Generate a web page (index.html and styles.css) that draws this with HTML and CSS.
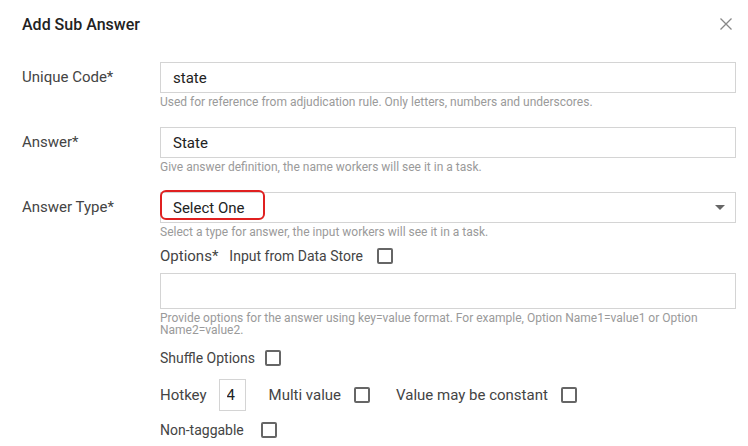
FILE: index.html
```html
<!DOCTYPE html>
<html>
<head>
    <title>Add Sub Answer</title>
    <link rel="stylesheet" href="styles.css">
</head>
<body>
    <div class="dialog">
        <div class="dialog-header">
            <h2 class="dialog-title">Add Sub Answer</h2>
            <button class="close-btn" aria-label="Close">
                <svg width="12" height="12" viewBox="0 0 12 12"><path d="M0.5 0.5 L11.5 11.5 M11.5 0.5 L0.5 11.5" stroke="#888" stroke-width="1.3" fill="none"/></svg>
            </button>
        </div>

        <div class="form-row">
            <label class="row-label" for="code">Unique Code*</label>
            <div class="row-field">
                <input class="text-input" type="text" id="code" value="state">
                <div class="hint">Used for reference from adjudication rule. Only letters, numbers and underscores.</div>
            </div>
        </div>

        <div class="form-row">
            <label class="row-label" for="answer">Answer*</label>
            <div class="row-field">
                <input class="text-input" type="text" id="answer" value="State">
                <div class="hint">Give answer definition, the name workers will see it in a task.</div>
            </div>
        </div>

        <div class="form-row">
            <label class="row-label" for="type">Answer Type*</label>
            <div class="row-field">
                <div class="select-box" id="type">
                    <span class="select-value">Select One</span>
                    <span class="select-arrow"></span>
                    <span class="highlight"></span>
                </div>
                <div class="hint">Select a type for answer, the input workers will see it in a task.</div>

                <div class="check-line options-line">
                    <span class="opt-label">Options*</span>
                    <span>Input from Data Store</span>
                    <span class="checkbox"></span>
                </div>
                <textarea class="text-area"></textarea>
                <div class="hint hint-wrap">Provide options for the answer using key=value format. For example, Option Name1=value1 or Option Name2=value2.</div>

                <div class="check-line shuffle-line">
                    <span>Shuffle Options</span>
                    <span class="checkbox"></span>
                </div>

                <div class="check-line hotkey-line">
                    <span>Hotkey</span>
                    <input class="hotkey-input" type="text" value="4">
                    <span class="multi-label">Multi value</span>
                    <span class="checkbox"></span>
                    <span class="const-label">Value may be constant</span>
                    <span class="checkbox"></span>
                </div>

                <div class="check-line tag-line">
                    <span>Non-taggable</span>
                    <span class="checkbox"></span>
                </div>
            </div>
        </div>
    </div>
</body>
</html>
```

FILE: styles.css
```css
body {
    margin: 0;
    background-color: #fff;
    font-family: Roboto, "Liberation Sans", Arial, sans-serif;
    color: #333;
}

.dialog {
    width: 748px;
    height: 446px;
    box-sizing: border-box;
    padding: 14px 12px 0 22px;
    overflow: hidden;
}

.dialog-header {
    display: flex;
    justify-content: space-between;
    align-items: center;
    height: 20px;
    margin-bottom: 28px;
}

.dialog-title {
    margin: 0;
    font-size: 16px;
    font-weight: 500;
    color: #222;
}

.close-btn {
    background: none;
    border: none;
    padding: 0;
    margin-right: 4px;
    display: flex;
    cursor: pointer;
}

.form-row {
    display: grid;
    grid-template-columns: 138px 1fr;
    margin-bottom: 18px;
}

.row-label {
    font-size: 15px;
    line-height: 31px;
    color: #444;
}

.text-input,
.select-box {
    display: block;
    width: 100%;
    height: 31px;
    box-sizing: border-box;
    border: 1px solid #d4d4d4;
    padding: 0 12px;
    font-family: inherit;
    font-size: 15px;
    color: #222;
    outline: none;
}

.select-box {
    position: relative;
    display: flex;
    align-items: center;
    justify-content: space-between;
    padding-right: 10px;
}

.select-arrow {
    width: 0;
    height: 0;
    border-left: 5px solid transparent;
    border-right: 5px solid transparent;
    border-top: 5px solid #666;
}

/* red callout round the placeholder */
.highlight {
    position: absolute;
    left: -1px;
    top: -3px;
    width: 105px;
    height: 30px;
    box-sizing: border-box;
    border: 2px solid #e02020;
    border-radius: 6px;
}

.hint {
    margin-top: 2px;
    font-size: 12px;
    line-height: 14px;
    color: #9a9a9a;
}

.hint-wrap {
    margin-top: 3px;
    padding-right: 30px;
    line-height: 12px;
}

.check-line {
    display: flex;
    align-items: center;
    font-size: 14px;
    color: #444;
}

.checkbox {
    width: 16px;
    height: 16px;
    box-sizing: border-box;
    border: 2px solid #666;
    border-radius: 2px;
    margin-left: 10px;
}

.options-line {
    margin-top: 7px;
    height: 20px;
}

.opt-label {
    font-size: 15px;
    margin-right: 11px;
}

.options-line .checkbox {
    margin-left: 14px;
}

.text-area {
    display: block;
    width: 100%;
    height: 36px;
    margin-top: 7px;
    box-sizing: border-box;
    border: 1px solid #d4d4d4;
    resize: none;
    font-family: inherit;
    outline: none;
}

.shuffle-line {
    margin-top: 12px;
    height: 20px;
}

.hotkey-line {
    margin-top: 11px;
    height: 32px;
    font-size: 15px;
}

.hotkey-input {
    width: 27px;
    height: 32px;
    box-sizing: border-box;
    margin-left: 12px;
    border: 1px solid #d4d4d4;
    padding: 0 0 0 7px;
    font-family: inherit;
    font-size: 15px;
    color: #222;
    outline: none;
}

.multi-label {
    margin-left: 23px;
}

.const-label {
    margin-left: 26px;
}

.hotkey-line .checkbox {
    margin-left: 13px;
}

.tag-line {
    margin-top: 9px;
    height: 20px;
}

.tag-line .checkbox {
    margin-left: 17px;
}
```
